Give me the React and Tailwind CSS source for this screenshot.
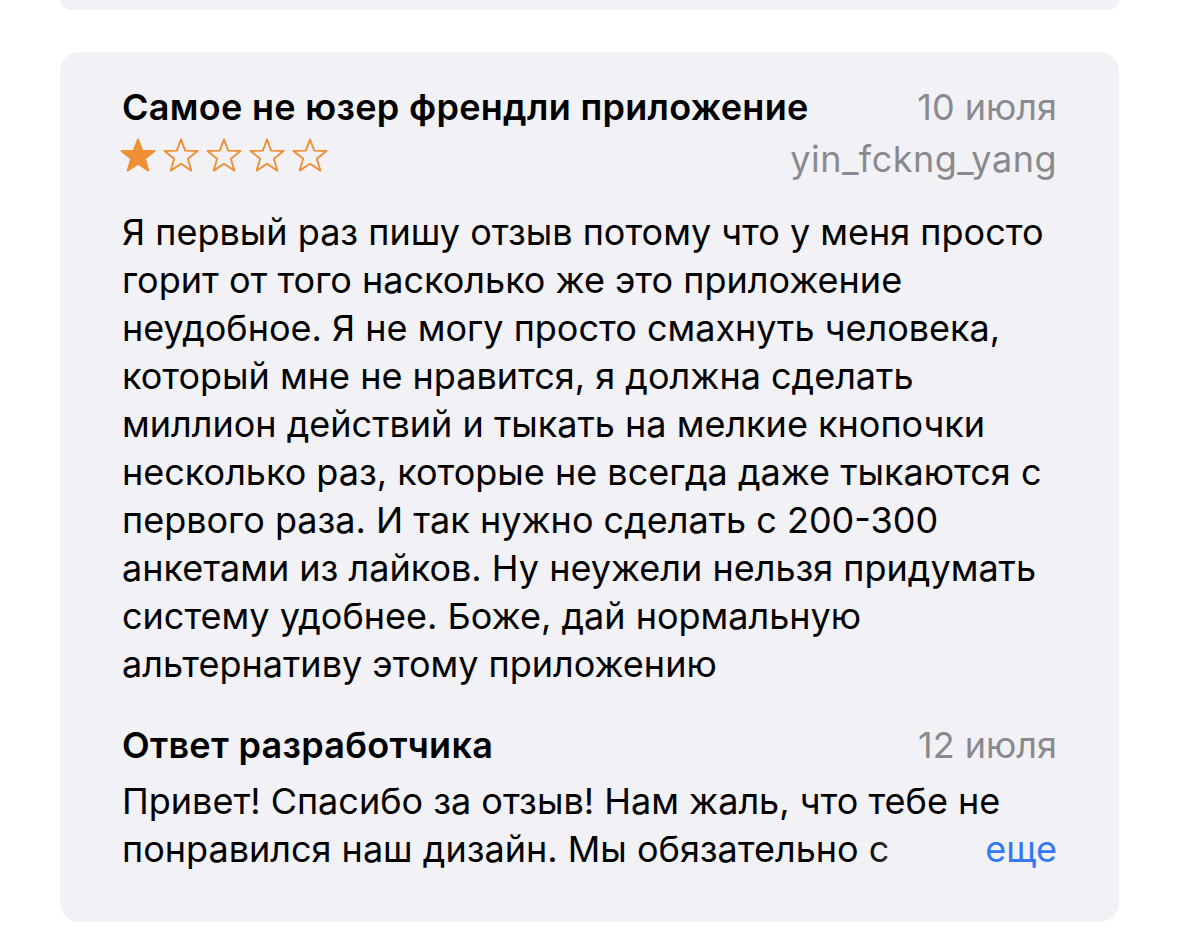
import React from 'react';

const BODY = [
  'Я первый раз пишу отзыв потому что у меня просто',
  'горит от того насколько же это приложение',
  'неудобное. Я не могу просто смахнуть человека,',
  'который мне не нравится, я должна сделать',
  'миллион действий и тыкать на мелкие кнопочки',
  'несколько раз, которые не всегда даже тыкаются с',
  'первого раза. И так нужно сделать с 200-300',
  'анкетами из лайков. Ну неужели нельзя придумать',
  'систему удобнее. Боже, дай нормальную',
  'альтернативу этому приложению',
];

function Star({ filled }) {
  return (
    <svg width="36" height="36" viewBox="0 0 24 24" className="shrink-0">
      <path
        d="M12 1.6L14.82 9.12 23 9.35 16.57 14.48 18.9 22.4 12 17.8 5.1 22.4 7.43 14.48 1 9.35 9.18 9.12z"
        fill={filled ? '#ef8f36' : 'none'}
        stroke="#ef8f36"
        strokeWidth="1.25"
        strokeLinejoin="round"
      />
    </svg>
  );
}

export default function App() {
  return (
    <div className="min-h-[938px] bg-white text-black" style={{ fontFamily: 'Inter, "Noto Sans", sans-serif' }}>
      {/* previous review, cut off */}
      <div className="mx-[60px] h-[10px] rounded-b-[20px] bg-[#f1f1f6]" />

      <div className="mx-[60px] mt-[42px] rounded-[20px] bg-[#f1f1f6] px-[62px] pt-[33px] pb-[49px] text-[36px]">
        <div className="flex items-baseline justify-between leading-[44px]">
          <h2 className="font-semibold tracking-[0.3px]">Самое не юзер френдли приложение</h2>
          <span className="text-[#8a8a8e]">10 июля</span>
        </div>

        <div className="mt-[8px] flex items-start justify-between leading-[44px]">
          <div className="flex gap-[7px] -ml-[2px]">
            <Star filled />
            <Star />
            <Star />
            <Star />
            <Star />
          </div>
          <span className="tracking-[0.5px] text-[#8a8a8e]">yin_fckng_yang</span>
        </div>

        <p className="mt-[27px] leading-[48px]">
          {BODY.map((line, i) => (
            <span key={i} className="block whitespace-nowrap">{line}</span>
          ))}
        </p>

        <div className="mt-[33px] flex items-baseline justify-between leading-[48px]">
          <h3 className="font-semibold tracking-[0.3px]">Ответ разработчика</h3>
          <span className="text-[#8a8a8e]">12 июля</span>
        </div>

        <div className="relative mt-[8px] leading-[48px]">
          <span className="block whitespace-nowrap">Привет! Спасибо за отзыв! Нам жаль, что тебе не</span>
          <span className="block whitespace-nowrap">понравился наш дизайн. Мы обязательно с</span>
          <div className="absolute right-0 bottom-0 flex items-center">
            <div className="h-[48px] w-[110px] bg-gradient-to-r from-transparent to-[#f1f1f6]" />
            <span className="bg-[#f1f1f6] pl-[10px] text-[#3478f6]">еще</span>
          </div>
        </div>
      </div>
    </div>
  );
}
